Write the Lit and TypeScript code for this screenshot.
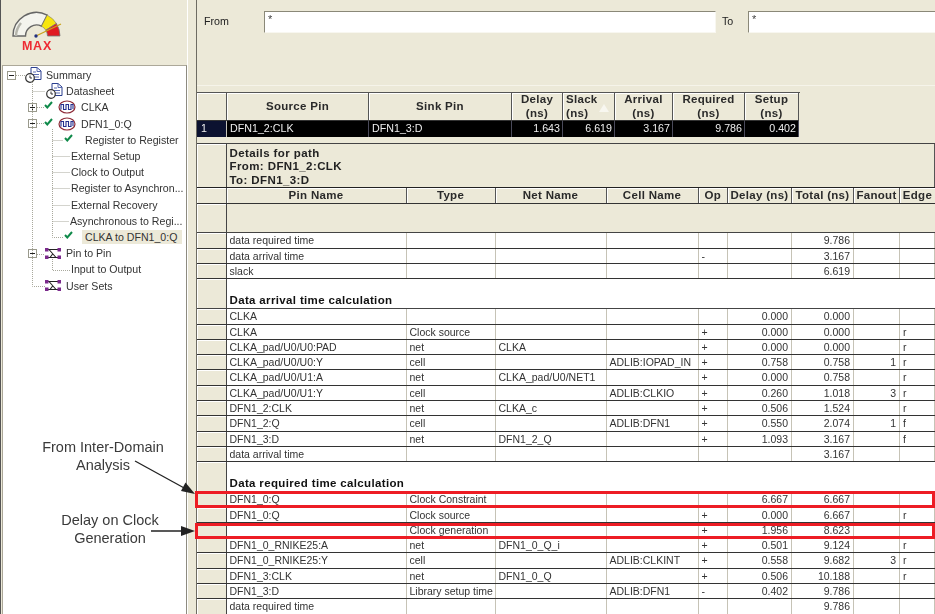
import { LitElement, css, html, svg } from "lit";
import { customElement } from "lit/decorators.js";

type Kind = "doc" | "wave" | "pins";

interface TreeRow {
  label: string;
  indent: number; // page x of the first thing in the row
  toggle?: "plus" | "minus";
  toggleGap?: number;
  check?: boolean;
  icon?: Kind;
  iconWidth?: number;
  selected?: boolean;
}

const TREE: TreeRow[] = [
  { label: "Summary", indent: 7, toggle: "minus", toggleGap: 9, icon: "doc", iconWidth: 21 },
  { label: "Datasheet", indent: 46, icon: "doc", iconWidth: 20 },
  { label: "CLKA", indent: 28, toggle: "plus", toggleGap: 7, check: true, icon: "wave", iconWidth: 23 },
  { label: "DFN1_0:Q", indent: 28, toggle: "minus", toggleGap: 7, check: true, icon: "wave", iconWidth: 23 },
  { label: "Register to Register", indent: 64, check: true },
  { label: "External Setup", indent: 71 },
  { label: "Clock to Output", indent: 71 },
  { label: "Register to Asynchron...", indent: 71 },
  { label: "External Recovery", indent: 71 },
  { label: "Asynchronous to Regi...", indent: 70 },
  { label: "CLKA to DFN1_0:Q", indent: 64, check: true, selected: true },
  { label: "Pin to Pin", indent: 28, toggle: "minus", toggleGap: 8, icon: "pins", iconWidth: 21 },
  { label: "Input to Output", indent: 71 },
  { label: "User Sets", indent: 45, icon: "pins", iconWidth: 21 },
];

const TOP_HEAD = [
  ["Source Pin"],
  ["Sink Pin"],
  ["Delay", "(ns)"],
  ["Slack", "(ns)"],
  ["Arrival", "(ns)"],
  ["Required", "(ns)"],
  ["Setup", "(ns)"],
];
const TOP_ROW = ["DFN1_2:CLK", "DFN1_3:D", "1.643", "6.619", "3.167", "9.786", "0.402"];

const DETAIL_HEAD = ["Pin Name", "Type", "Net Name", "Cell Name", "Op", "Delay (ns)", "Total (ns)", "Fanout", "Edge"];

// pin, type, net, cell, op, delay, total, fanout, edge
const SUMMARY_ROWS = [
  ["data required time", "", "", "", "", "", "9.786", "", ""],
  ["data arrival time", "", "", "", "-", "", "3.167", "", ""],
  ["slack", "", "", "", "", "", "6.619", "", ""],
];
const ARRIVAL_ROWS = [
  ["CLKA", "", "", "", "", "0.000", "0.000", "", ""],
  ["CLKA", "Clock source", "", "", "+", "0.000", "0.000", "", "r"],
  ["CLKA_pad/U0/U0:PAD", "net", "CLKA", "", "+", "0.000", "0.000", "", "r"],
  ["CLKA_pad/U0/U0:Y", "cell", "", "ADLIB:IOPAD_IN", "+", "0.758", "0.758", "1", "r"],
  ["CLKA_pad/U0/U1:A", "net", "CLKA_pad/U0/NET1", "", "+", "0.000", "0.758", "", "r"],
  ["CLKA_pad/U0/U1:Y", "cell", "", "ADLIB:CLKIO", "+", "0.260", "1.018", "3", "r"],
  ["DFN1_2:CLK", "net", "CLKA_c", "", "+", "0.506", "1.524", "", "r"],
  ["DFN1_2:Q", "cell", "", "ADLIB:DFN1", "+", "0.550", "2.074", "1", "f"],
  ["DFN1_3:D", "net", "DFN1_2_Q", "", "+", "1.093", "3.167", "", "f"],
  ["data arrival time", "", "", "", "", "", "3.167", "", ""],
];
const REQUIRED_ROWS = [
  ["DFN1_0:Q", "Clock Constraint", "", "", "", "6.667", "6.667", "", ""],
  ["DFN1_0:Q", "Clock source", "", "", "+", "0.000", "6.667", "", "r"],
  ["", "Clock generation", "", "", "+", "1.956", "8.623", "", ""],
  ["DFN1_0_RNIKE25:A", "net", "DFN1_0_Q_i", "", "+", "0.501", "9.124", "", "r"],
  ["DFN1_0_RNIKE25:Y", "cell", "", "ADLIB:CLKINT", "+", "0.558", "9.682", "3", "r"],
  ["DFN1_3:CLK", "net", "DFN1_0_Q", "", "+", "0.506", "10.188", "", "r"],
  ["DFN1_3:D", "Library setup time", "", "ADLIB:DFN1", "-", "0.402", "9.786", "", ""],
  ["data required time", "", "", "", "", "", "9.786", "", ""],
];

// columns of the detail table that hold right aligned numbers
const RIGHT_COLS = new Set([5, 6, 7]);

// the tree box content starts 3px in from the page edge
const TREE_LEFT = 3;

const docIcon = html`<svg width="17" height="16" viewBox="0 0 17 16">
  <path d="M6 .5h6l4 3.500v8.500H6z" fill="#fff" stroke="#2a3f8f" />
  <path d="M12 .5v4h4M8 5h3M8 7.500h6M8 10h6" fill="none" stroke="#5a6bb0" />
  <circle cx="5" cy="11" r="4.300" fill="#fff" stroke="#333" stroke-width="1.200" />
  <path d="M5 8.500V11h2" fill="none" stroke="#333" />
</svg>`;

const waveIcon = html`<svg width="18" height="14" viewBox="0 0 18 14">
  <ellipse cx="9" cy="7" rx="8" ry="6" fill="#fff" stroke="#8e2b38" stroke-width="1.200" />
  <path d="M3 9.500V4.500h2.500v5H8V4.500h2.500v5H13V4.500h2V9" fill="none" stroke="#232f8e" stroke-width="1.100" />
</svg>`;

const pinsIcon = html`<svg width="16" height="11" viewBox="0 0 16 11">
  <path d="M3 1.500h10M3 9.500h10M4 1.500l7 8M8 5.500L5 9.500" fill="none" stroke="#222" stroke-width="1.100" />
  <path d="M0 0h3.500v3.500H0zM12.500 0h3.500v3.500h-3.500zM0 7.500h3.500v3.500H0zM12.500 7.500h3.500v3.500h-3.500z" fill="#7b2a8c" />
</svg>`;

const checkIcon = html`<svg width="9" height="8" viewBox="0 0 9 8">
  <path d="M1 4l2.300 2.500L8 1" fill="none" stroke="#0f8a4a" stroke-width="2" />
</svg>`;

@customElement("app-root")
export class AppRoot extends LitElement {
  static styles = css`
    :host {
      display: block;
      width: 935px;
      height: 614px;
      overflow: hidden;
      font-family: "Liberation Sans", Arial, sans-serif;
      font-size: 10.7px;
      color: #222;
      background: #ece9d8;
    }

    .window {
      position: relative;
      display: grid;
      grid-template-columns: 187px 10px 738px;
      width: 935px;
      height: 614px;
      box-sizing: border-box;
      overflow: hidden;
      filter: blur(0.3px);
    }

    /* left pane */
    .left {
      position: relative;
      display: flex;
      flex-direction: column;
      border-left: 1px solid #555;
      box-sizing: border-box;
    }

    .logo {
      height: 65px;
      flex: none;
      padding-left: 11px;
      box-sizing: border-box;
    }

    .logo-mark {
      display: flex;
      flex-direction: column;
      width: 50px;
      align-items: center;
      padding-top: 11px;
    }

    .logo-mark svg {
      display: block;
    }

    .logo-text {
      color: #ee2a33;
      font-size: 12.500px;
      font-weight: bold;
      letter-spacing: 0.8px;
      line-height: 12px;
      margin-top: 2px;
    }

    .tree {
      flex: 1;
      margin-left: 1px;
      padding-top: 1px;
      background: #fff;
      border: 1px solid #aca899;
      border-right-color: #8d8b80;
      border-bottom: none;
      box-sizing: border-box;
    }

    .tree-lines {
      position: absolute;
      left: -1px;
      top: 0;
      pointer-events: none;
    }

    .tree-row {
      position: relative;
      display: flex;
      align-items: center;
      height: 16.200px;
      white-space: nowrap;
      font-size: 10.600px;
      color: #333;
    }

    .toggle {
      position: relative;
      width: 9px;
      height: 9px;
      flex: none;
      border: 1px solid #9a9a8c;
      background: #fff;
      box-sizing: border-box;
    }

    .toggle::before {
      content: "";
      position: absolute;
      left: 1px;
      right: 1px;
      top: 3px;
      height: 1px;
      background: #222;
    }

    .toggle.plus::after {
      content: "";
      position: absolute;
      top: 1px;
      bottom: 1px;
      left: 3px;
      width: 1px;
      background: #222;
    }

    .check {
      display: flex;
      width: 14px;
      flex: none;
      position: relative;
      top: -2px;
    }

    .icon {
      display: flex;
      flex: none;
    }

    .label.selected {
      background: #ece9d8;
      margin-left: 4px;
      padding: 1px 3px;
      width: 94px;
    }

    .label.after-check {
      margin-left: 7px;
    }

    /* splitter */
    .splitter {
      border-right: 1px solid #6e6c62;
      box-shadow: inset 1px 0 0 #fff;
    }

    /* right pane */
    .right {
      display: flex;
      flex-direction: column;
      min-width: 0;
    }

    .filter {
      display: flex;
      align-items: flex-start;
      height: 86px;
      flex: none;
      padding: 11px 0 0 7px;
      box-sizing: border-box;
      border-bottom: 1px solid #f6f4ea;
    }

    .filter label {
      line-height: 20px;
    }

    .from-label {
      width: 60px;
      flex: none;
    }

    .to-label {
      width: 26px;
      flex: none;
      margin-left: 6px;
    }

    .field {
      height: 22px;
      box-sizing: border-box;
      background: #fff;
      border-top: 1px solid #8a8878;
      border-left: 1px solid #8a8878;
      border-right: 1px solid #f8f7f0;
      border-bottom: 1px solid #f8f7f0;
      padding-left: 3px;
      line-height: 15px;
      font-size: 11px;
      color: #444;
    }

    .field.from {
      width: 452px;
      flex: none;
    }

    .field.to {
      flex: 1;
      border-right: none;
    }

    .top-grid {
      margin-top: 6px;
      flex: none;
      width: 603px;
      border-top: 1px solid #555;
    }

    .top-row {
      display: grid;
      grid-template-columns: 30px 142px 143px 51px 52px 58px 72px 54px;
    }

    .head {
      display: flex;
      flex-direction: column;
      align-items: center;
      justify-content: center;
      position: relative;
      height: 28px;
      box-sizing: border-box;
      border-right: 1px solid #555;
      border-bottom: 1px solid #333;
      box-shadow: inset 1px 1px 0 #fff;
      font-weight: bold;
      font-size: 11.500px;
      letter-spacing: 0.3px;
      line-height: 13.500px;
      color: #2a2a2a;
    }

    .head.left-text {
      align-items: flex-start;
      padding-left: 3px;
    }

    .sort {
      position: absolute;
      right: 5px;
      top: 11px;
      width: 0;
      height: 0;
      border-left: 5px solid transparent;
      border-right: 5px solid transparent;
      border-bottom: 8px solid #f8f7f0;
    }

    .sel {
      height: 16px;
      box-sizing: border-box;
      background: #000;
      color: #eee;
      border-right: 1px solid #4a4a5a;
      padding: 0 3px;
      line-height: 15px;
      white-space: nowrap;
    }

    .sel.num {
      text-align: right;
      padding: 0 2px;
    }

    .sel.rownum {
      background: #0c1230;
      padding-left: 4px;
      border-right-color: #c8c6ba;
    }

    .details {
      margin-top: 6px;
      flex: 1;
      min-height: 0;
      border-top: 1px solid #444;
      font-size: 10.500px;
      --cols: 29.500px 180px 89px 111px 92px 29.500px 64px 62px 46px 35px;
    }

    .title-row {
      display: grid;
      grid-template-columns: 29.500px 1fr;
      height: 44px;
      box-sizing: border-box;
      border-bottom: 1px solid #222;
    }

    .row-head {
      background: #ece9d8;
      border-right: 1px solid #444;
      box-shadow: inset 1px 1px 0 #fff;
    }

    .title-text {
      padding: 3px 0 0 3px;
      border-right: 1px solid #555;
      font-weight: bold;
      line-height: 13.300px;
      font-size: 11.500px;
      letter-spacing: 0.4px;
    }

    .detail-head,
    .detail-row {
      display: grid;
      grid-template-columns: var(--cols);
      box-sizing: border-box;
    }

    .detail-head {
      height: 16px;
      border-bottom: 1px solid #333;
    }

    .dh {
      text-align: center;
      font-weight: bold;
      font-size: 11.500px;
      letter-spacing: 0.3px;
      line-height: 15px;
      white-space: nowrap;
      border-right: 1px solid #555;
      box-shadow: inset 1px 1px 0 #fff;
      color: #2a2a2a;
    }

    .dh:last-child {
      border-right: none;
    }

    .blank-row {
      display: grid;
      grid-template-columns: 29.500px 1fr;
      height: 29.400px;
      box-sizing: border-box;
      border-bottom: 1px solid #444;
    }

    .detail-row {
      height: 15.300px;
      border-bottom: 1px solid #333;
      background: #fff;
    }

    .cell {
      border-right: 1px solid #c6c3b6;
      padding: 0 3px;
      line-height: 15px;
      white-space: nowrap;
      overflow: hidden;
      color: #333;
    }

    .cell.num {
      text-align: right;
      padding-right: 3px;
    }

    .section-row {
      display: grid;
      grid-template-columns: 29.500px 1fr;
      height: 30px;
      box-sizing: border-box;
      border-bottom: 1px solid #444;
      background: #fff;
    }

    .section-title {
      align-self: end;
      padding-left: 3px;
      font-weight: bold;
      font-size: 11.500px;
      letter-spacing: 0.35px;
      line-height: 15px;
      color: #111;
    }

    /* annotations drawn over the screenshot */
    .marker {
      position: absolute;
      left: 195px;
      width: 740px;
      border: 3px solid #ed1c24;
      box-sizing: border-box;
    }

    .marker.one {
      top: 491px;
      height: 17px;
    }

    .marker.two {
      top: 523px;
      height: 16px;
    }

    .note {
      position: absolute;
      text-align: center;
      font-size: 14.500px;
      line-height: 18px;
      color: #3a3a3a;
      white-space: nowrap;
    }

    .note.inter {
      left: 40px;
      top: 438px;
      width: 126px;
    }

    .note.delay {
      left: 50px;
      top: 511px;
      width: 120px;
    }

    .arrows {
      position: absolute;
      left: 0;
      top: 0;
      pointer-events: none;
    }
  `;

  private renderTreeRow(row: TreeRow) {
    return html`<div class="tree-row" style="padding-left:${row.indent - TREE_LEFT}px">
      ${row.toggle
        ? html`<span class="toggle ${row.toggle}" style="margin-right:${row.toggleGap}px"></span>`
        : ""}
      ${row.check ? html`<span class="check">${checkIcon}</span>` : ""}
      ${row.icon
        ? html`<span class="icon" style="width:${row.iconWidth}px">
            ${row.icon === "doc" ? docIcon : row.icon === "wave" ? waveIcon : pinsIcon}
          </span>`
        : ""}
      <span class="label ${row.selected ? "selected" : row.check && !row.icon ? "after-check" : ""}"
        >${row.label}</span
      >
    </div>`;
  }

  private renderDetailRow(cells: string[]) {
    return html`<div class="detail-row">
      <div class="row-head"></div>
      ${cells.map(
        (c, i) => html`<div class="cell ${RIGHT_COLS.has(i) ? "num" : ""}">${c}</div>`
      )}
    </div>`;
  }

  render() {
    return html`
      <div class="window">
        <section class="left">
          <div class="logo">
            <div class="logo-mark">
              <svg width="50" height="27" viewBox="0 0 50 27">
                <path d="M1 25A23.500 23.500 0 0 1 35.200 4.100L29.500 15.200A11 11 0 0 0 13.500 25Z" fill="#f4f4ee" stroke="#666" stroke-width="1.400" />
                <path d="M4 25A20.500 20.500 0 0 1 9 12" fill="none" stroke="#b5b5ac" stroke-width="2.500" />
                <path d="M35.200 4.100A23.500 23.500 0 0 1 44.400 12.500L33.800 19.200A11 11 0 0 0 29.500 15.200Z" fill="#f7e50e" stroke="#777" stroke-width="0.600" />
                <path d="M44.400 12.500A23.500 23.500 0 0 1 48 25H35.500A11 11 0 0 0 33.800 19.200Z" fill="#e01a22" stroke="#777" stroke-width="0.800" />
                <path d="M25 24.500L49 13" stroke="#c9a21a" stroke-width="1.300" />
                <circle cx="24" cy="25" r="1.700" fill="#22307f" />
              </svg>
              <span class="logo-text">MAX</span>
            </div>
          </div>
          <div class="tree">${TREE.map((r) => this.renderTreeRow(r))}</div>
          <svg class="tree-lines" width="187" height="300" viewBox="0 0 187 300">
            ${svg`<path
              d="M16 75.500H25M32.500 80V286.500H45M32.500 91.500H45M37 107.500H44M37 123.500H44
                 M52.500 129V237.500H63M52.500 140.500H63M52.500 156.500H70M52.500 172.500H70M52.500 188.500H70
                 M52.500 205.500H70M52.500 221.500H69M37 254.500H45M52.500 259V270.500H70"
              fill="none" stroke="#a8a89c" stroke-dasharray="1 1" />`}
          </svg>
        </section>

        <div class="splitter"></div>

        <section class="right">
          <div class="filter">
            <label class="from-label">From</label>
            <div class="field from">*</div>
            <label class="to-label">To</label>
            <div class="field to">*</div>
          </div>

          <div class="top-grid">
            <div class="top-row">
              <div class="head"></div>
              ${TOP_HEAD.map(
                (lines, i) => html`<div class="head ${i === 3 ? "left-text" : ""}">
                  ${lines.map((l) => html`<span>${l}</span>`)}
                  ${i === 3 ? html`<span class="sort"></span>` : ""}
                </div>`
              )}
            </div>
            <div class="top-row">
              <div class="sel rownum">1</div>
              ${TOP_ROW.map(
                (v, i) => html`<div class="sel ${i > 1 ? "num" : ""}">${v}</div>`
              )}
            </div>
          </div>

          <div class="details">
            <div class="title-row">
              <div class="row-head"></div>
              <div class="title-text">
                Details for path<br />From: DFN1_2:CLK<br />To: DFN1_3:D
              </div>
            </div>
            <div class="detail-head">
              <div class="dh"></div>
              ${DETAIL_HEAD.map((h) => html`<div class="dh">${h}</div>`)}
            </div>
            <div class="blank-row">
              <div class="row-head"></div>
              <div></div>
            </div>
            ${SUMMARY_ROWS.map((r) => this.renderDetailRow(r))}
            <div class="section-row">
              <div class="row-head"></div>
              <div class="section-title">Data arrival time calculation</div>
            </div>
            ${ARRIVAL_ROWS.map((r) => this.renderDetailRow(r))}
            <div class="section-row">
              <div class="row-head"></div>
              <div class="section-title">Data required time calculation</div>
            </div>
            ${REQUIRED_ROWS.map((r) => this.renderDetailRow(r))}
          </div>
        </section>

        <div class="marker one"></div>
        <div class="marker two"></div>
        <div class="note inter">From Inter-Domain<br />Analysis</div>
        <div class="note delay">Delay on Clock<br />Generation</div>
        <svg class="arrows" width="935" height="614" viewBox="0 0 935 614">
          <path d="M135 461L186 489" stroke="#222" stroke-width="1.300" />
          <path d="M195 494L181 491L185.500 482.500Z" fill="#222" />
          <path d="M151 531H184" stroke="#222" stroke-width="1.300" />
          <path d="M195 531L181 526V536Z" fill="#222" />
        </svg>
      </div>
    `;
  }
}
